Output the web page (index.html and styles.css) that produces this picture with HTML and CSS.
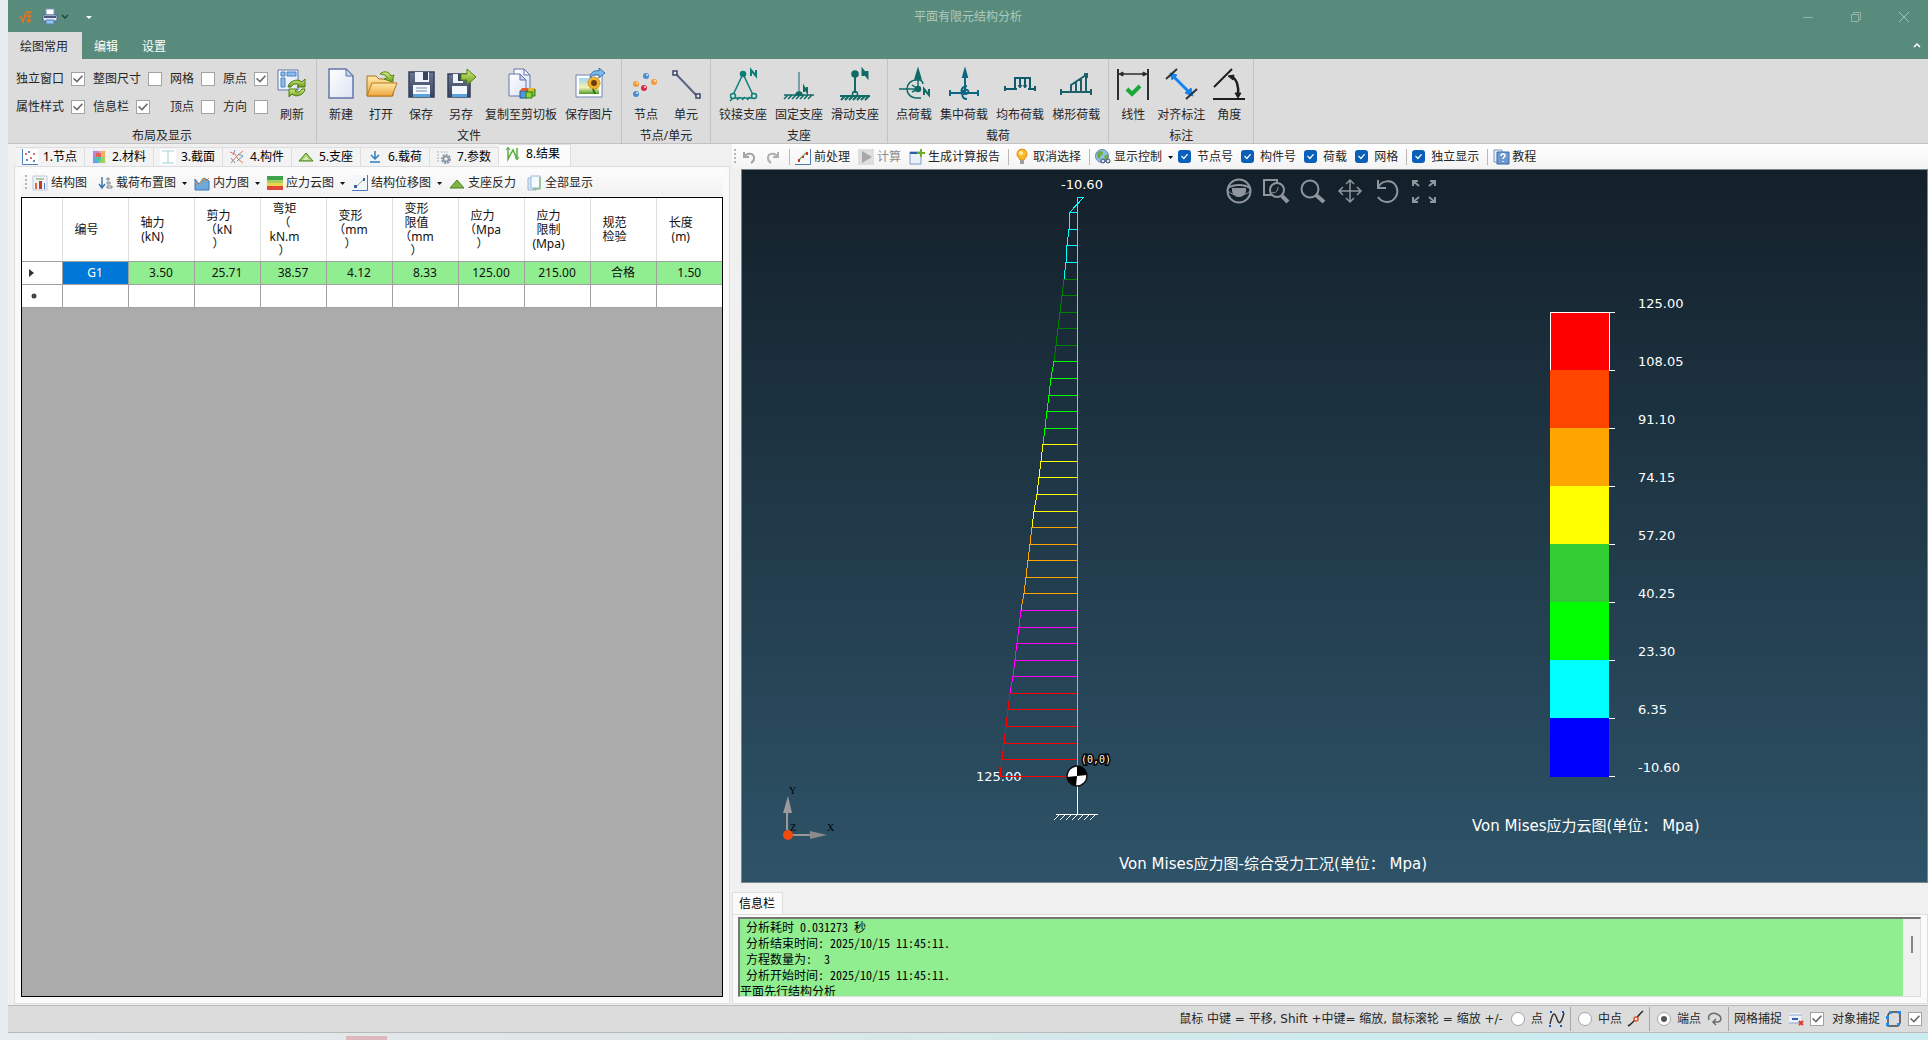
FILE: index.html
```html
<!DOCTYPE html>
<html lang="zh-CN">
<head>
<meta charset="utf-8">
<title>平面有限元结构分析</title>
<link rel="stylesheet" href="styles.css">
</head>
<body>
<svg class="defs" aria-hidden="true">
  <defs>
    <linearGradient id="paper" x1="0" y1="0" x2="1" y2="1"><stop offset="0" stop-color="#fff"/><stop offset="1" stop-color="#dbe3f3"/></linearGradient>
    <linearGradient id="folder" x1="0" y1="0" x2="0" y2="1"><stop offset="0" stop-color="#ffe9a8"/><stop offset="1" stop-color="#eda640"/></linearGradient>
    <linearGradient id="leaf" x1="0" y1="0" x2="0" y2="1"><stop offset="0" stop-color="#d4ef7a"/><stop offset="1" stop-color="#6a9c1c"/></linearGradient>
    <linearGradient id="disk" x1="0" y1="0" x2="0" y2="1"><stop offset="0" stop-color="#6a7590"/><stop offset="1" stop-color="#39435f"/></linearGradient>
    <linearGradient id="sky" x1="0" y1="0" x2="0" y2="1"><stop offset="0" stop-color="#9fd6f5"/><stop offset="0.6" stop-color="#f3f2b0"/><stop offset="1" stop-color="#4d9a2a"/></linearGradient>
  </defs>
</svg>
<div class="app">
  <header class="titlebar">
    <div class="quick">
      <svg class="i16" viewBox="0 0 16 16" fill="none" stroke="#e8721c" stroke-width="1.5"><path d="M1 9l2-1 2 5 3-10h6M8 7h6M11 3v10M9 11l2 2 2-2"/></svg>
      <button class="plain" aria-label="打印"><svg class="i16" viewBox="0 0 16 16"><path d="M4 0h8v6H4z" fill="#fff" stroke="#7f93c0"/><path d="M1 6h14v6H1z" fill="#e7ecf7" stroke="#4c5f8e"/><path d="M2 7h12v2H2z" fill="#4a5a80"/><path d="M4 11h8v4H4z" fill="#8cc7ef" stroke="#5a7eb5"/></svg><svg class="i8" viewBox="0 0 8 8" fill="none" stroke="#23483b" stroke-width="1.5"><path d="M1 2l3 3 3-3"/></svg></button>
      <button class="plain customise" aria-label="自定义"><svg class="i8" viewBox="0 0 8 8"><path d="M1 3h6l-3 3z" fill="#fff"/></svg></button>
    </div>
    <h1>平面有限元结构分析</h1>
    <div class="winbtns">
      <button class="plain" aria-label="最小化"><svg class="i12" viewBox="0 0 12 12" fill="none" stroke="#93b6a8"><path d="M1 6.500h10"/></svg></button>
      <button class="plain" aria-label="还原"><svg class="i12" viewBox="0 0 12 12" fill="none" stroke="#93b6a8"><path d="M1.500 3.500h7v7h-7zM3.500 3.500v-2h7v7h-2"/></svg></button>
      <button class="plain" aria-label="关闭"><svg class="i12" viewBox="0 0 12 12" fill="none" stroke="#a5c3b7"><path d="M1 1l10 10M11 1L1 11"/></svg></button>
    </div>
  </header>
  <nav class="ribbon-tabs">
    <button class="active">绘图常用</button><button>编辑</button><button>设置</button>
    <button class="plain collapse" aria-label="折叠"><svg class="i8" viewBox="0 0 8 8" fill="none" stroke="#fff" stroke-width="1.500"><path d="M1 5l3-3 3 3"/></svg></button>
  </nav>

  <section class="ribbon">
    <div class="group">
      <div class="items">
        <div class="options">
          <label>独立窗口<input type="checkbox" checked></label><label>整图尺寸<input type="checkbox"></label><label>网格<input type="checkbox"></label><label>原点<input type="checkbox" checked></label>
          <label>属性样式<input type="checkbox" checked></label><label>信息栏<input type="checkbox" checked></label><label>顶点<input type="checkbox"></label><label>方向<input type="checkbox"></label>
        </div>
        <button><svg viewBox="0 0 32 32"><path d="M2 3h20v20H2z" fill="url(#paper)" stroke="#5d76ac"/><path d="M5 5h4v4H5zM11 5h9v4h-9zM5 11h4v9H5z" fill="#8abbe8" stroke="#4b83c4"/><path d="M12 20c1-6 9-9 14-5l3-3v8h-8l2-2c-3-2-6-1-8 2z" fill="url(#leaf)" stroke="#4e7a14"/><path d="M29 22c-1 6-9 9-13 5l-3 3v-8h8l-2 2c3 2 5 1 7-2z" fill="url(#leaf)" stroke="#4e7a14"/></svg>刷新</button>
      </div>
      <div class="caption">布局及显示</div>
    </div>
    <div class="group">
      <div class="items">
        <button><svg viewBox="0 0 32 32"><path d="M4 2h17l7 7v22H4z" fill="url(#paper)" stroke="#6276ac" stroke-width="1.500"/><path d="M21 2v7h7z" fill="#c5d2ec" stroke="#6276ac"/></svg>新建</button>
        <button><svg viewBox="0 0 32 32"><path d="M2 29V9h9l3 3h14v17z" fill="url(#folder)" stroke="#a8701c"/><path d="M2 29l5-13h25l-5 13z" fill="url(#folder)" stroke="#b8781c"/><path d="M15 7c4-4 10-2 11 2l3-1-2 7-8-3 3-1c-1-3-4-4-7-4z" fill="url(#leaf)" stroke="#58851a"/></svg>打开</button>
        <button><svg viewBox="0 0 32 32"><path d="M4 5h25v25H4z" fill="url(#disk)" stroke="#343f5a" stroke-width="1.500"/><path d="M10 5h14v10H10z" fill="#eef2fa"/><path d="M18 5h5v8h-5z" fill="#39435c"/><path d="M8 18h17v12H8z" fill="#f5f8ff"/><path d="M8 27h17v3H8z" fill="#58a4df"/><path d="M11 21h11M11 24h11" stroke="#7889aa"/></svg>保存</button>
        <button><svg viewBox="0 0 32 32"><path d="M3 7h22v23H3z" fill="url(#disk)" stroke="#343f5a" stroke-width="1.500"/><path d="M8 7h10v9H8z" fill="#eef2fa"/><path d="M13 7h5v7h-5z" fill="#39435c"/><path d="M7 19h15v11H7z" fill="#f5f8ff"/><path d="M7 27h15v3H7z" fill="#58a4df"/><path d="M16 7h6V2l9 8-9 8v-5h-6z" fill="url(#leaf)" stroke="#4f8316"/></svg>另存</button>
        <button><svg viewBox="0 0 32 32"><path d="M9 2h10l6 6v15H9z" fill="url(#paper)" stroke="#6276ac"/><path d="M19 2v6h6" fill="none" stroke="#6276ac"/><path d="M4 7h11l6 6v16H4z" fill="url(#paper)" stroke="#6276ac"/><path d="M15 7v6h6z" fill="#c5d2ec" stroke="#6276ac"/><path d="M22 22h8v7h-8z" fill="#7ac22d" stroke="#3d7a14"/><path d="M15 24h7v7h-7z" fill="#4b9be2" stroke="#22548f"/><path d="M21 25h6v6h-6z" fill="#8ed43d" stroke="#3d7a14"/><path d="M17 21h6l-2 3h-6z" fill="#e85a2a"/><path d="M24 21h6l-2 3h-5z" fill="#f5b42d"/></svg>复制至剪切板</button>
        <button><svg viewBox="0 0 32 32"><path d="M3 8h26v22H3z" fill="#fff" stroke="#6f83b2"/><path d="M6 11h20v16H6z" fill="url(#sky)"/><circle cx="21" cy="16" r="6" fill="#f3b327" stroke="#c57b12" stroke-dasharray="2 1"/><circle cx="21" cy="16" r="3" fill="#6b3d12"/><path d="M20 22l2 5" stroke="#2e6e18" stroke-width="2"/><path d="M17 11c0-6 5-8 9-7V1l6 5-6 5V8c-4-1-6 0-9 3z" fill="#79b8ea" stroke="#3b73ad"/></svg>保存图片</button>
      </div>
      <div class="caption">文件</div>
    </div>
    <div class="group">
      <div class="items">
        <button><svg viewBox="0 0 32 32"><circle cx="16" cy="9" r="3" fill="#4a8bd0"/><circle cx="24" cy="15" r="3" fill="#f29a3b"/><circle cx="6" cy="17" r="3" fill="#f29a3b"/><circle cx="14" cy="21" r="3" fill="#d12e42"/><circle cx="6" cy="27" r="3" fill="#4a8bd0"/><g fill="#fff" opacity=".8"><circle cx="17" cy="8" r="1"/><circle cx="25" cy="14" r="1"/><circle cx="7" cy="16" r="1"/><circle cx="15" cy="20" r="1"/><circle cx="7" cy="26" r="1"/></g></svg>节点</button>
        <button><svg viewBox="0 0 32 32" fill="#e6ecf5" stroke="#3c4664"><path d="M5 6l22 23" stroke-width="2" stroke="#5a6382"/><path d="M3 4h4v4H3zM26 27h4v4h-4z" stroke-width="1.500"/></svg>单元</button>
      </div>
      <div class="caption">节点/单元</div>
    </div>
    <div class="group">
      <div class="items">
        <button><svg viewBox="0 0 32 32" fill="none" stroke="#0b7f77" stroke-width="1.500"><circle cx="16" cy="7" r="2.500" fill="#0b7f77"/><path d="M15 9L6 28M17 9l9 19M4 31h24M3 34l4-4M10 33l3-3M15 33l3-3M20 33l3-3"/><circle cx="6" cy="29" r="2.500" fill="#dcdcdc"/><circle cx="27" cy="29" r="2.500" fill="#dcdcdc"/><path d="M24 9V3l5 6V3" stroke-width="2"/></svg>铰接支座</button>
        <button><svg viewBox="0 0 32 32" fill="none" stroke="#106a66" stroke-width="1.500"><path d="M16 5v23" stroke-width="1"/><path d="M1 28h30M5 28l-4 4M9 28l-4 4M13 28l-4 4M17 28l-4 4M21 28l-4 4M25 28l-4 4M29 28l-4 4"/><path d="M13 28a3 3 0 016 0z" fill="#106a66"/><path d="M21 25v-5l3 5v-5" stroke-width="2"/></svg>固定支座</button>
        <button><svg viewBox="0 0 32 32" fill="none" stroke="#106a66" stroke-width="1.500"><circle cx="16" cy="7" r="3" fill="#106a66"/><path d="M16 8v18" stroke-width="2"/><circle cx="16" cy="27" r="2.500"/><path d="M1 29h30M6 29l-4 4M10 29l-4 4M14 29l-4 4M18 29l-4 4M22 29l-4 4M26 29l-4 4M30 29l-4 4" stroke-width="2"/><path d="M24 9V4l4 5V4" stroke-width="3"/></svg>滑动支座</button>
      </div>
      <div class="caption">支座</div>
    </div>
    <div class="group">
      <div class="items">
        <button><svg viewBox="0 0 32 32" fill="none" stroke="#106a66" stroke-width="1.500"><path d="M20 22V4M1 22h19M18 13a9 9 0 000 18h5M18 13c4-1 7 1 7 4M14 18l6 4-6 3"/><path d="M17 12l3-10 3 10z" fill="#106a66"/><circle cx="20" cy="22" r="2.500" fill="#106a66"/><path d="M26 28v-6l5 6v-6" stroke-width="2"/></svg>点荷载</button>
        <button><svg viewBox="0 0 32 32" fill="none" stroke="#0a6683" stroke-width="2"><path d="M1 26h30M2 23v6M30 23v6M17 26V6M19 19c-7 1-7 8-2 8s4-5 0-4-4 9 2 9"/><path d="M15 10l2-7 2 7z" fill="#0a6683"/></svg>集中荷载</button>
        <button><svg viewBox="0 0 32 32" fill="none" stroke="#0f5a6b" stroke-width="2"><path d="M1 22h12M24 22h7M1 19v5M31 19v5M11 22V11h15v11M16 11v9M21 11v9"/><path d="M14 18l2 3 2-3M19 18l2 3 2-3" stroke-width="1"/></svg>均布荷载</button>
        <button><svg viewBox="0 0 32 32" fill="none" stroke="#1a6268" stroke-width="2"><path d="M1 25h30M1 22v6M31 22v6M11 25v-7L26 8v17M16 15v10M21 12v13M24 7h3v4"/></svg>梯形荷载</button>
      </div>
      <div class="caption">载荷</div>
    </div>
    <div class="group">
      <div class="items">
        <button><svg viewBox="0 0 32 32" fill="none" stroke="#2d2d2d"><path d="M1 2v31M31 2v31" stroke-width="2"/><path d="M3 7h26" stroke-width="1.500"/><path d="M6 5L2 7l4 2zM26 5l4 2-4 2z" fill="#222"/><path d="M10 22l5 5 8-8" stroke="#18a834" stroke-width="4"/></svg>线性</button>
        <button><svg viewBox="0 0 32 32" fill="none" stroke="#333"><path d="M8 9l17 17" stroke="#1583f0" stroke-width="3"/><path d="M5 6l7 2-5 5zM28 29l-2-8-6 5z" fill="#1583f0" stroke="#1583f0"/><path d="M1 12L12 2M21 32l11-10" stroke-width="2"/></svg>对齐标注</button>
        <button><svg viewBox="0 0 32 32" fill="none" stroke="#1f1f1f"><path d="M1 20L19 2M0 32h32" stroke-width="2"/><path d="M18 9c6 3 8 11 7 19" stroke-width="2.500"/><path d="M15 9l6-1-1 5zM22 26h6l-3 5z" fill="#222"/></svg>角度</button>
      </div>
      <div class="caption">标注</div>
    </div>
  </section>

  <main class="work">
    <section class="left">
      <nav class="tabs">
        <button><svg class="i16" viewBox="0 0 16 16"><path d="M0 0h16v16H0z" fill="#fff"/><path d="M.5 0v15.500H16" stroke="#4b7fc0" fill="none"/><g fill="#d23c34"><circle cx="4" cy="5" r="1"/><circle cx="9" cy="9" r="1"/><circle cx="12" cy="5" r="1"/></g><g fill="#345ea8"><circle cx="7" cy="3" r="1"/><circle cx="5" cy="11" r="1"/><circle cx="12" cy="12" r="1"/></g></svg>1.节点</button>
        <button><svg class="i16" viewBox="0 0 16 16"><path d="M1 1h14v14H1z" fill="#f0e8f6"/><path d="M2 2h6v6H2z" fill="#b98ad6"/><path d="M8 2h6v6H8z" fill="#f0b06a"/><path d="M2 8h6v6H2z" fill="#5fa9e0"/><path d="M8 8h6v6H8z" fill="#9cd45a"/><path d="M5 4h5v4H5z" fill="#e6605a"/><path d="M5 8h5v4H5z" fill="#4cc4a8"/></svg>2.材料</button>
        <button><svg class="i16" viewBox="0 0 16 16"><path d="M0 0h16v16H0z" fill="#fff"/><path d="M2 2h12M2 14h12M8 2v12" stroke="#a5cfd0"/></svg>3.截面</button>
        <button><svg class="i16" viewBox="0 0 16 16" fill="none"><path d="M1 3l5 2 3 5 5 4M2 14l5-6 7-6" stroke="#dd7a52"/><path d="M9 5l5 2M2 9l4 5M8 12l6-5M6 1l-2 5" stroke="#5a93ca"/></svg>4.构件</button>
        <button><svg class="i16" viewBox="0 0 16 16"><path d="M1 12l7-8 7 8z" fill="#a9d36f" stroke="#4b7f20"/><path d="M5 11l3-4 3 4z" fill="#d6ecb2"/></svg>5.支座</button>
        <button><svg class="i16" viewBox="0 0 16 16" fill="none" stroke="#2c80c0" stroke-width="1.500"><path d="M8 2v8M4 6l4 4 4-4M3 13h10"/></svg>6.载荷</button>
        <button><svg class="i16" viewBox="0 0 16 16" fill="none"><path d="M2 2v12M5 3h7" stroke="#aab2ba" stroke-dasharray="2 1"/><circle cx="10" cy="10" r="4" stroke="#8995a2" stroke-width="2" stroke-dasharray="2 1"/><circle cx="10" cy="10" r="2.500" stroke="#8995a2" stroke-width="1.500"/></svg>7.参数</button>
        <button class="active"><svg class="i16" viewBox="0 0 16 16" fill="none" stroke="#5aad3b" stroke-width="1.500"><path d="M3 2v11L8 4l4 9V2"/><path d="M1 4l2-3 2 3M10 11l2 3 2-3" stroke-width="1"/></svg>8.结果</button>
      </nav>
      <div class="page">
        <div class="toolbar">
          <span class="grip"></span>
          <button><svg class="i16" viewBox="0 0 16 16"><path d="M1 1h14v14H1z" fill="#eef2fa" stroke="#c0cadc"/><path d="M3 8h2v6H3z" fill="#d96a3c"/><path d="M7 6h3v8H7z" fill="#c2391f"/><path d="M12 8h1v6h-1z" fill="#4b7bbd"/><path d="M4 4h8" stroke="#6da83c"/></svg>结构图</button>
          <button><svg class="i16" viewBox="0 0 16 16" fill="none"><path d="M5 2v11M2 9l3 4 3-4" stroke="#4178ad" stroke-width="1.500"/><path d="M10 3h2v2h-2zM10 7h3v2h-3zM10 11h5v2h-5z" stroke="#7b848d"/></svg>载荷布置图<i class="drop"></i></button>
          <button><svg class="i16" viewBox="0 0 16 16"><path d="M1 4l4 5 5-6 5 3v9H1z" fill="#6ca9dc" stroke="#3d77af"/><path d="M1 7l4 3 4-7 3 3 3-3" fill="none" stroke="#e78b3a"/></svg>内力图<i class="drop"></i></button>
          <button><svg class="i16" viewBox="0 0 16 16"><path d="M0 1h16v4H0z" fill="#3fa34e"/><path d="M0 5h16v3H0z" fill="#a9cf5c"/><path d="M0 8h16v3H0z" fill="#ecd54b"/><path d="M0 11h16v4H0z" fill="#e0473a"/></svg>应力云图<i class="drop"></i></button>
          <button><svg class="i16" viewBox="0 0 16 16"><path d="M0 0h16v16H0z" fill="#f4f7fc"/><path d="M0 15.500h15.500V0" stroke="#4f79b8" fill="none"/><path d="M4 12l8-8" stroke="#8fbe62"/><path d="M2 10h3v3H2zM11 3h2v3h-2z" fill="#3a65a8"/></svg>结构位移图<i class="drop"></i></button>
          <button><svg class="i16" viewBox="0 0 16 16"><path d="M1 13l7-8 7 8z" fill="#7fb640" stroke="#4b7f20"/></svg>支座反力</button>
          <button><svg class="i16" viewBox="0 0 16 16"><path d="M2 3h8v12H2z" fill="#d6e5f7" stroke="#9ab8dc"/><path d="M5 1h9v12H5z" fill="#f4faff" stroke="#9ab8dc"/><path d="M14 2v12H7" fill="none" stroke="#6fb248"/></svg>全部显示</button>
        </div>
        <div class="gridview">
          <table>
            <colgroup><col class="rowhead"><col span="10"></colgroup>
            <thead><tr><th></th><th>编号</th><th>轴力<br>(kN)</th><th>剪力<br>（kN<br>）</th><th>弯矩<br>（<br>kN.m<br>）</th><th>变形<br>（mm<br>）</th><th>变形<br>限值<br>（mm<br>）</th><th>应力<br>（Mpa<br>）</th><th>应力<br>限制<br>(Mpa)</th><th>规范<br>检验</th><th>长度<br>(m)</th></tr></thead>
            <tbody>
              <tr class="ok"><td><svg class="i8" viewBox="0 0 8 8"><path d="M1 0l5 4-5 4z" fill="#333"/></svg></td><td class="sel">G1</td><td>3.50</td><td>25.71</td><td>38.57</td><td>4.12</td><td>8.33</td><td>125.00</td><td>215.00</td><td>合格</td><td>1.50</td></tr>
              <tr><td><svg class="i8 dot" viewBox="0 0 8 8"><circle cx="4" cy="4" r="2.500" fill="#444"/></svg></td><td></td><td></td><td></td><td></td><td></td><td></td><td></td><td></td><td></td><td></td></tr>
            </tbody>
          </table>
        </div>
      </div>
    </section>

    <section class="right">
      <div class="toolbar view-tools">
        <span class="grip"></span>
        <button aria-label="撤销"><svg class="i16" viewBox="0 0 16 16" fill="none" stroke="#a5a5a5" stroke-width="2"><path d="M3 3v5h5M3 8c3-5 10-4 10 1 0 2-1 4-3 5"/></svg></button>
        <button aria-label="重做"><svg class="i16" viewBox="0 0 16 16" fill="none" stroke="#b0b0b0" stroke-width="2"><path d="M13 3v5H8M13 8C10 3 3 4 3 9c0 2 1 4 3 5"/></svg></button>
        <span class="sep"></span>
        <button><svg class="i16" viewBox="0 0 16 16"><path d="M0 0h16v16H0z" fill="#f7f9fd"/><path d="M0 15.500h15.500V0" stroke="#4f79b8" fill="none"/><path d="M3 12l9-9" stroke="#7fae55" stroke-width="1.500"/><path d="M3 10h2v3H3zM11 3h2v3h-2zM7 7h2v2H7z" fill="#c03a2a"/></svg>前处理</button>
        <button class="off"><svg class="i16" viewBox="0 0 16 16"><path d="M0 0h16v16H0z" fill="#dedede"/><path d="M4 2l10 6-10 6z" fill="#a8a8a8"/></svg>计算</button>
        <button><svg class="i16" viewBox="0 0 16 16"><path d="M1 3h11v12H1z" fill="#eaf1fb" stroke="#7d97c3"/><path d="M1 3h11v2H1z" fill="#2d5fa6"/><path d="M12 0v8M8 4h8" stroke="#6fae20" stroke-width="2"/></svg>生成计算报告</button>
        <span class="sep"></span>
        <button><svg class="i16" viewBox="0 0 16 16"><path d="M8 0a5 5 0 00-3 9l1 2h4l1-2a5 5 0 00-3-9z" fill="#fbb829" stroke="#df8a10"/><circle cx="7" cy="4" r="2" fill="#fff0b0"/><path d="M6 11h4v4H6z" fill="#99a0a8"/></svg>取消选择</button>
        <span class="sep"></span>
        <button><svg class="i16" viewBox="0 0 16 16"><circle cx="7" cy="7" r="6.500" fill="#8fc0e8" stroke="#6b88a8"/><path d="M2 4c3-3 6-2 6 0s-3 2-3 5-3 0-3-5zM9 7l4-2v5l-3 1z" fill="#72ac3d"/><circle cx="8" cy="12" r="2" fill="#dfe6f0" stroke="#35476a"/><circle cx="13" cy="12" r="2" fill="#dfe6f0" stroke="#35476a"/></svg>显示控制<i class="drop"></i></button>
        <label><input type="checkbox" checked>节点号</label><label><input type="checkbox" checked>构件号</label><label><input type="checkbox" checked>荷载</label><label><input type="checkbox" checked>网格</label>
        <span class="sep"></span>
        <label><input type="checkbox" checked>独立显示</label>
        <span class="sep"></span>
        <button><svg class="i16" viewBox="0 0 16 16"><path d="M1 1h8v12H1z" fill="#e7eefa" stroke="#7d97c3"/><path d="M4 3h12v12H4z" fill="#6d99d0" stroke="#3c68a4"/><path d="M8 7c0-3 4-3 4 0 0 1-2 1-2 3M10 12v1" stroke="#fff" stroke-width="1.500" fill="none"/></svg>教程</button>
      </div>
      <div class="viewport">
        <svg viewBox="742 170 1185 712" class="scene">
          <g fill="none" stroke="#8f969d" stroke-width="2">
            <circle cx="1239" cy="191" r="11.500"/><path d="M1228 188c6-4 16-4 22 0"/><path d="M1228 191c6 6 16 6 22 0" stroke-width="1"/><path d="M1233 189h12a6 6 0 01-12 2z" fill="#8f969d"/>
            <path d="M1271 195h-7v-15h13v4"/><circle cx="1277" cy="190" r="7"/><path d="M1282 196l6 6" stroke-width="4"/><path d="M1272 192c2 2 6 0 6-5" stroke-width="1"/>
            <circle cx="1310" cy="189" r="8.500"/><path d="M1316 195l8 7" stroke-width="4"/>
            <path d="M1350 180v22M1339 191h22M1346 184l4-4 4 4M1346 198l4 4 4-4M1343 187l-4 4 4 4M1357 187l4 4-4 4" stroke-width="1.500"/>
            <path d="M1378 180v8h8M1378 188c3-8 14-9 18-2 4 8-2 16-9 16-4 0-7-2-9-5"/>
            <path d="M1413 186v-5h5M1413 181l6 5M1430 181h5v5M1435 181l-6 5M1413 197v5h5M1413 202l6-5M1430 202h5v-5M1435 202l-6-5"/>
          </g>
          <g class="num"><text x="1061" y="189">-10.60</text><text x="976" y="781">125.00</text></g>
          <g class="crisp">
            <path stroke="#0ff" d="M1077 776V197h7L1070 212L1069 229L1067 245L1066 262L1064 279M1070 212h7M1069 229h8M1067 245h10M1066 262h11"/>
            <path stroke="#008000" d="M1064 279L1062 295L1060 312L1058 328L1056 345L1054 361M1064 279h13M1062 295h15M1060 312h17M1058 328h19M1056 345h21"/>
            <path stroke="#0f0" d="M1054 361L1051 378L1049 395L1047 411L1045 428L1043 444M1054 361h23M1051 378h26M1049 395h28M1047 411h30M1045 428h32"/>
            <path stroke="#ff0" d="M1043 444L1041 461L1039 477L1037 494L1034 511L1032 527M1043 444h34M1041 461h36M1039 477h38M1037 494h40M1034 511h43"/>
            <path stroke="#ffa500" d="M1032 527L1030 544L1028 560L1026 577L1024 593L1021 610M1032 527h45M1030 544h47M1028 560h49M1026 577h51M1024 593h53"/>
            <path stroke="#f0f" d="M1021 610L1019 627L1017 643L1015 660L1013 676L1010 693M1021 610h56M1019 627h58M1017 643h60M1015 660h62M1013 676h64"/>
            <path stroke="#f00" d="M1010 693L1008 709L1006 726L1004 743L1002 759L1000 776h77M1010 693h67M1008 709h69M1006 726h71M1004 743h73M1002 759h75"/>
            <path stroke="#fff" d="M1077 786v28M1056 814h42M1060 814l-6 6M1066 814l-6 6M1072 814l-6 6M1078 814l-6 6M1084 814l-6 6M1090 814l-6 6M1096 814l-6 6"/>
          </g>
          <circle cx="1077" cy="776" r="10" fill="#fff" stroke="#111" stroke-width="1.500"/>
          <path d="M1077 776V766a10 10 0 0110 9zM1077 776l-1 10a10 10 0 01-9-9z" fill="#000"/>
          <text class="origin" x="1081" y="763">(0,0)</text>
          <g>
            <path d="M787 830v-18M790 835h21" stroke="#999" stroke-width="2"/><path d="M783 813l5-17 4 17z" fill="#9a9a9a"/><path d="M810 831l17 4-17 4z" fill="#8a8a8a"/>
            <circle cx="788" cy="835" r="5" fill="#f24a0c"/>
            <g class="axis"><text x="789" y="794">Y</text><text x="790" y="831">Z</text><text x="827" y="831">X</text></g>
          </g>
          <g class="crisp">
            <path fill="red" d="M1550 312h59v58h-59z"/><path fill="#ff4500" d="M1550 370h59v58h-59z"/><path fill="orange" d="M1550 428h59v58h-59z"/><path fill="#ff0" d="M1550 486h59v58h-59z"/><path fill="#32cd32" d="M1550 544h59v58h-59z"/><path fill="#0f0" d="M1550 602h59v58h-59z"/><path fill="#0ff" d="M1550 660h59v58h-59z"/><path fill="#00f" d="M1550 718h59v59h-59z"/>
            <path fill="none" stroke="#fff" d="M1550 370v-58h65M1609 312v58h6M1609 428h6M1609 486h6M1609 544h6M1609 602h6M1609 660h6M1609 718h6M1609 776h6"/>
          </g>
          <g class="num"><text x="1638" y="308">125.00</text><text x="1638" y="366">108.05</text><text x="1638" y="424">91.10</text><text x="1638" y="482">74.15</text><text x="1638" y="540">57.20</text><text x="1638" y="598">40.25</text><text x="1638" y="656">23.30</text><text x="1638" y="714">6.35</text><text x="1638" y="772">-10.60</text></g>
          <g class="cap"><text x="1472" y="831">Von Mises应力云图(单位： Mpa)</text><text x="1119" y="869">Von Mises应力图-综合受力工况(单位： Mpa)</text></g>
        </svg>
      </div>
      <div class="info">
        <label class="info-tab" for="log">信息栏</label>
        <div class="info-page">
          <div class="logbox">
<textarea id="log" readonly>
 分析耗时 0.031273 秒
 分析结束时间: 2025/10/15 11:45:11.
 方程数量为:  3
 分析开始时间: 2025/10/15 11:45:11.
平面先行结构分析</textarea>
            <div class="scroll"><span></span></div>
          </div>
        </div>
      </div>
    </section>
  </main>

  <footer class="status">
    <span class="hint">鼠标 中键 = 平移, Shift +中键= 缩放, 鼠标滚轮 = 缩放 +/-</span>
    <label class="cell"><input type="radio" name="snap">点<svg class="i16" viewBox="0 0 16 16" fill="none"><path d="M1 13c3-14 5-11 7-5s4 5 7-6" stroke="#333" stroke-width="1.500"/><path d="M1 0h2v2H1zM13 0h2v2h-2zM0 14h2v2H0zM11 14h2v2h-2z" fill="#1c4fd0"/></svg></label>
    <label class="cell"><input type="radio" name="snap">中点<svg class="i16" viewBox="0 0 16 16" fill="none"><path d="M0 15c6-3 8-9 15-15" stroke="#222" stroke-width="1.500"/><circle cx="8" cy="8" r="2" fill="#fff" stroke="#e0501c" stroke-width="1.500"/></svg></label>
    <label class="cell"><input type="radio" name="snap" checked>端点<svg class="i16" viewBox="0 0 16 16" fill="none" stroke="#6d6d6d" stroke-width="1.500"><path d="M2 9C0 3 6 1 10 3c5 2 5 7 1 8H7M9 8l-3 3 3 3"/></svg></label>
    <label>网格捕捉<svg class="i16" viewBox="0 0 16 16"><path d="M1 2h12v10H1z" fill="#edf2fa"/><path d="M1 4h13M1 12h10" stroke="#8aa5cf"/><path d="M4 8h6" stroke="#2e5fa8" stroke-width="2"/><path d="M11 10l4 4M15 10l-4 4" stroke="#db3a2b" stroke-width="2"/></svg><input type="checkbox" checked></label>
    <label>对象捕捉<svg class="i16" viewBox="0 0 16 16" fill="none"><path d="M4 1h10v11l-2 3H2V4z" stroke="#444" stroke-width="1.500"/><path d="M3 0h3v3H3zM12 0h3v3h-3zM0 5h3v3H0zM0 12h3v3H0zM11 12h3v3h-3z" fill="#1d8df0"/></svg><input type="checkbox" checked></label>
  </footer>
</div>
</body>
</html>
```

FILE: styles.css
```css
* { box-sizing: border-box; }
html, body { height: 100%; }
body {
  margin: 0;
  padding: 0 0 7px 8px;
  background:
    linear-gradient(#deb8bc, #deb8bc) 346px 100% / 41px 4px no-repeat,
    linear-gradient(90deg, #e6ecef 0, #dfe6e7 30%, #c8ecef 80%);
  font: 12px/16px "Noto Sans", "Noto Sans CJK SC", sans-serif;
  color: #262626;
  overflow: hidden;
}
button, input, textarea { font: inherit; color: inherit; margin: 0; }
button { border: 0; background: none; padding: 0; }
svg { display: block; flex: none; overflow: visible; }
.defs { position: absolute; width: 0; height: 0; }
.i16 { width: 16px; height: 16px; }
.i12 { width: 12px; height: 12px; }
.i8 { width: 8px; height: 8px; }
.plain { display: flex; align-items: center; }

.app { display: flex; flex-direction: column; height: 100%; background: #f0f0f0; }

/* title bar */
.titlebar {
  display: grid;
  grid-template-columns: 1fr auto 1fr;
  align-items: center;
  height: 32px;
  padding-top: 2px;
  background: #588b7b;
}
.quick { display: flex; align-items: center; padding-left: 10px; gap: 8px; }
.quick .plain { gap: 3px; }
.quick .customise { margin-left: 8px; }
.titlebar h1 { margin: 0; font-size: 12px; font-weight: 400; color: #aecabf; }
.winbtns { display: flex; justify-content: flex-end; gap: 36px; padding-right: 18px; }

.ribbon-tabs { display: flex; height: 27px; background: #588b7b; color: #fff; }
.ribbon-tabs button { padding: 3px 12px 0; }
.ribbon-tabs .active { padding-right: 14px; background: #dcdcdc; color: #262626; }
.ribbon-tabs .collapse { margin-left: auto; padding: 0 7px; }

/* ribbon */
.ribbon { display: flex; height: 85px; background: #dcdcdc; border-bottom: 1px solid #c3c3c3; }
.group { display: flex; flex-direction: column; padding: 8px 8px 0; border-right: 1px solid #c3c3c3; }
.group .items { display: flex; gap: 8px; height: 56px; margin-bottom: 5px; }
.items button { display: flex; flex-direction: column; align-items: center; gap: 8px; min-width: 32px; white-space: nowrap; }
.items button svg { width: 32px; height: 32px; }
.caption { text-align: center; }
.options { display: grid; grid-template-columns: 69px 69px 45px 45px; grid-auto-rows: 24px; gap: 4px 8px; }
.options label { display: flex; align-items: center; gap: 7px; white-space: nowrap; }

input[type="checkbox"], input[type="radio"] {
  appearance: none;
  flex: none;
  display: grid;
  place-items: center;
  width: 14px;
  height: 14px;
  background: #fff;
  border: 1px solid #a3a3a3;
}
input[type="checkbox"]:checked::after {
  content: "";
  width: 10px;
  height: 8px;
  background: #6b6b6b;
  clip-path: polygon(0 50%, 10% 35%, 38% 68%, 88% 4%, 100% 16%, 40% 98%);
}
input[type="radio"] { border-radius: 50%; }
input[type="radio"]:checked::after { content: ""; width: 6px; height: 6px; border-radius: 50%; background: #555; }

/* work area */
.work { display: flex; flex: 1; min-height: 0; }
.left { display: flex; flex-direction: column; flex: 0 1 722px; padding: 0 0 1px 6px; }
.right { display: flex; flex-direction: column; flex: 1; min-width: 0; margin-left: 2px; }

.tabs { display: flex; align-items: flex-end; height: 22px; padding-left: 2px; color: #000; }
.tabs button {
  display: flex;
  align-items: center;
  gap: 5px;
  width: 69px;
  height: 19px;
  padding-left: 6px;
  border: 1px solid #dedede;
  border-width: 1px 1px 0 0;
  background: #f3f3f3;
  white-space: nowrap;
}
.tabs .active { width: 72px; height: 22px; padding-bottom: 3px; background: #fbfbfb; }
.page { display: flex; flex-direction: column; flex: 1; padding: 2px 6px 6px; background: #fafafa; border: 1px solid #dedede; min-height: 0; }

.toolbar { display: flex; align-items: center; gap: 10px; height: 27px; padding-left: 4px; background: linear-gradient(#fdfdfd, #f1f1f1); white-space: nowrap; }
.toolbar button, .toolbar label { display: flex; align-items: center; gap: 3px; }
.grip { width: 2px; height: 15px; margin-right: -5px; background: repeating-linear-gradient(#b5b5b5 0 2px, transparent 2px 4px); }
.drop { width: 5px; height: 3px; margin: 2px -3px 0 3px; background: #111; clip-path: polygon(0 0, 100% 0, 50% 100%); }
.page .toolbar { margin-bottom: 1px; }

.gridview { flex: 1; background: #ababab; border: 1px solid #000; min-height: 0; }
table { width: 100%; table-layout: fixed; border-collapse: collapse; background: #fff; text-align: center; color: #111; }
.rowhead { width: 40px; }
th { height: 63px; padding: 2px 17px 0 0; font-weight: 400; line-height: 14px; white-space: nowrap; border: 1px solid #dedede; border-bottom-color: #a0a0a0; border-top: 0; }
td { height: 23px; padding: 0; border: 1px solid #a0a0a0; }
th:first-child, td:first-child { border-left: 0; padding-left: 6px; }
th:last-child, td:last-child { border-right: 0; }
.ok td { background: #90ee90; }
.ok td:first-child { background: #fff; }
.ok .sel { background: #0078d7; color: #fff; }
.dot { margin-left: 2px; }

/* viewer */
.view-tools { height: 25px; gap: 8px; padding-left: 2px; background: linear-gradient(#fff, #f3f3f3); overflow: hidden; }
.view-tools .grip { margin-right: -3px; }
.view-tools label { gap: 6px; }
.view-tools .sep { width: 1px; height: 16px; margin: 0 -3px 0 0; background: #b8b8b8; }
.view-tools input[type="checkbox"] { width: 13px; height: 13px; border: 0; border-radius: 3px; background: #0a5fb8; }
.view-tools input[type="checkbox"]:checked::after { width: 7px; height: 6px; background: #fff; }
.off { color: #8d8d8d; }

.viewport { flex: 1; min-height: 0; margin-left: 9px; border: 1px solid #7b868a; background: linear-gradient(#13202a, #2e5368); }
.scene { width: 100%; height: 100%; }
.crisp { shape-rendering: crispEdges; fill: none; }
.num, .cap { fill: #fff; font: 13px "DejaVu Sans", "Noto Sans CJK SC", sans-serif; }
.cap { font-size: 15px; }
.origin { fill: #fff; stroke: #000; stroke-width: 3px; paint-order: stroke; font: 10px "DejaVu Sans Mono", monospace; }
.axis { fill: #000; font: 10px "Liberation Serif", serif; }

/* message panel */
.info { margin-top: 9px; padding-bottom: 1px; }
.info-tab { display: block; width: 51px; height: 22px; padding-left: 6px; line-height: 21px; background: #fafafa; border: 1px solid #dedede; border-bottom: 0; color: #000; }
.info-page { height: 90px; padding: 2px 6px 6px 5px; background: #fafafa; border: 1px solid #dedede; }
.logbox { display: flex; height: 100%; background: #90ee90; border: 2px solid #767676; border-right: 1px solid #ddd; border-bottom: 1px solid #ddd; }
textarea { flex: 1; padding: 0; border: 0; outline: 0; resize: none; overflow: hidden; background: none; font: 12px/16px "Noto Sans Mono CJK SC", "Noto Sans CJK SC", monospace; color: #000; }
.scroll { display: flex; justify-content: center; width: 17px; padding-top: 17px; background: #f0f0f0; }
.scroll span { width: 2px; height: 17px; background: #858585; }

/* status bar */
.status { display: flex; align-items: center; justify-content: flex-end; gap: 8px; height: 28px; padding-right: 6px; background: #dcdcdc; border: 1px solid #b9b9b9; border-width: 1px 0; white-space: nowrap; }
.status label { display: flex; align-items: center; gap: 6px; }
.status .cell { height: 24px; padding-right: 5px; margin-right: -1px; border-right: 1px solid #a8a8a8; }
.status .cell:nth-child(4) { margin-right: -3px; }
.hint { font-family: "DejaVu Sans", "Noto Sans CJK SC", sans-serif; }
```
